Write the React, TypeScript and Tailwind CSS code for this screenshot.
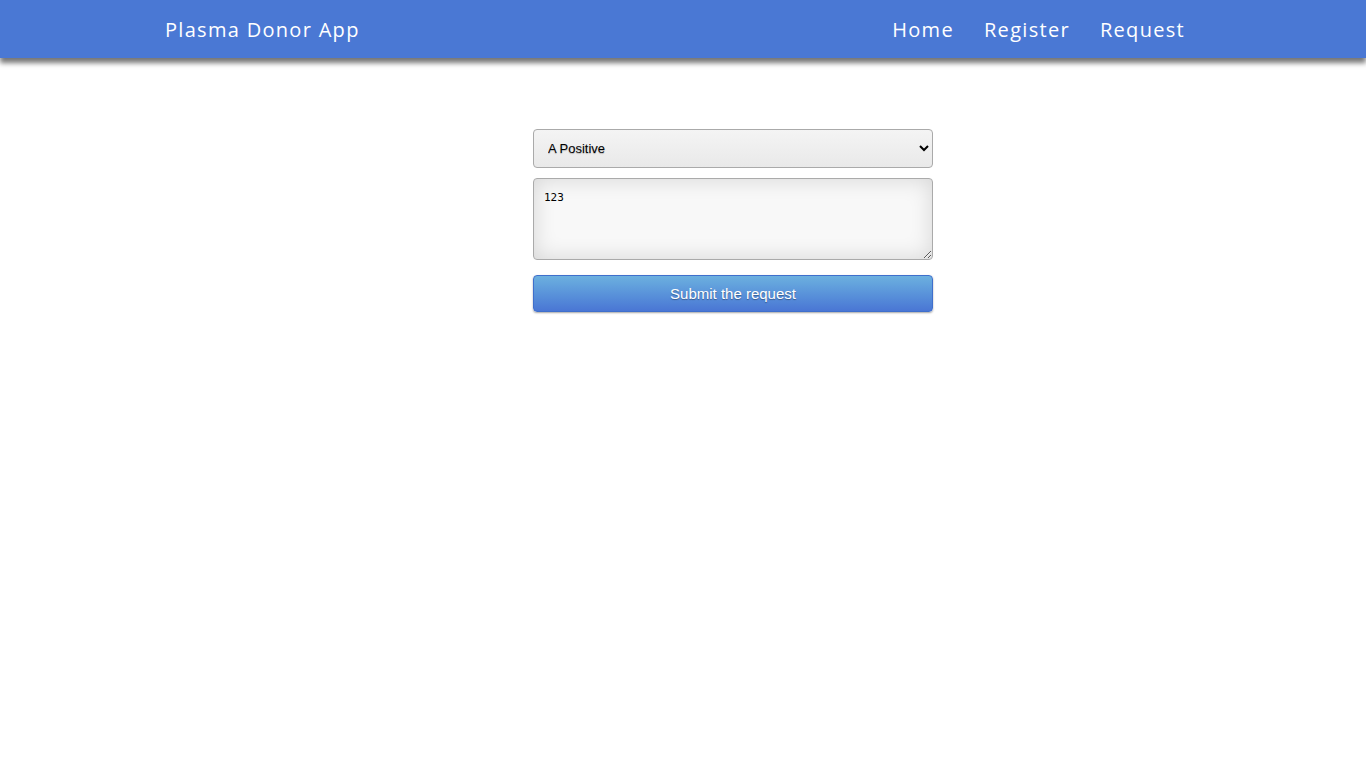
import { useState } from "react"

const bloodGroups = [
  "A Positive",
  "A Negative",
  "B Positive",
  "B Negative",
  "AB Positive",
  "AB Negative",
  "O Positive",
  "O Negative",
]

function Navbar() {
  return (
    <nav className="h-[58px] bg-[#4a78d4] shadow-[0_5px_5px_#777] relative z-10 font-['Open_Sans',sans-serif] text-white">
      <div className="flex items-center justify-between h-full pl-[165px] pr-[181px] pt-[2px]">
        <span className="text-[20px] tracking-[1.3px]">Plasma Donor App</span>
        <ul className="flex gap-[30px] text-[20px] tracking-[1.3px]">
          <li>Home</li>
          <li>Register</li>
          <li>Request</li>
        </ul>
      </div>
    </nav>
  )
}

function App() {
  const [group, setGroup] = useState("A Positive")
  const [note, setNote] = useState("123")

  return (
    <div className="min-h-screen bg-white">
      <Navbar />
      <main className="flex justify-center pt-[71px] pl-[100px]">
        <form className="w-[400px] flex flex-col" onSubmit={(e) => e.preventDefault()}>
          <select
            value={group}
            onChange={(e) => setGroup(e.target.value)}
            className="h-[39px] rounded-[4px] border border-[#aaa] bg-gradient-to-b from-[#f4f4f4] to-[#e9e9e9] pl-[10px] pr-[8px] text-[13px] text-black font-['Liberation_Sans',Arial,sans-serif] [text-shadow:0_1px_1px_rgba(0,0,0,0.25)]"
          >
            {bloodGroups.map((g) => (
              <option key={g} value={g}>{g}</option>
            ))}
          </select>
          <textarea
            value={note}
            onChange={(e) => setNote(e.target.value)}
            className="mt-[10px] h-[82px] rounded-[4px] border border-[#aaa] bg-[#f8f8f8] shadow-[inset_0_0_22px_rgba(0,0,0,0.14)] px-[10px] py-[11px] text-[11px] text-black font-['DejaVu_Sans_Mono',monospace]"
          />
          <button
            type="submit"
            className="mt-[15px] h-[37px] rounded-[4px] border border-[#3f6fcc] bg-gradient-to-b from-[#6cb0df] to-[#4a76d4] shadow-[0_1px_2px_rgba(0,0,0,0.35)] pt-[1px] text-white text-[15px] font-['Liberation_Sans',Arial,sans-serif] [text-shadow:0_1px_1px_rgba(0,0,0,0.35)]"
          >
            Submit the request
          </button>
        </form>
      </main>
    </div>
  )
}

export default App
